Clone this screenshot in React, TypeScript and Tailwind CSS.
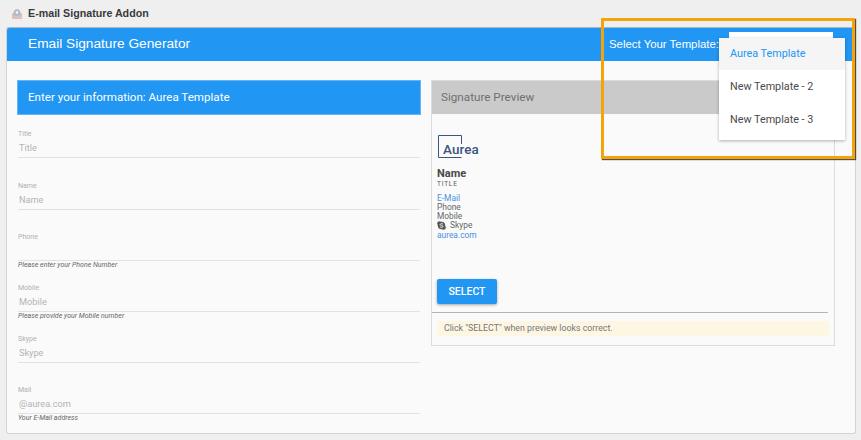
import React from 'react';

const fields = [
  { label: 'Title', placeholder: 'Title', help: '' },
  { label: 'Name', placeholder: 'Name', help: '' },
  { label: 'Phone', placeholder: '', help: 'Please enter your Phone Number' },
  { label: 'Mobile', placeholder: 'Mobile', help: 'Please provide your Mobile number' },
  { label: 'Skype', placeholder: 'Skype', help: '' },
  { label: 'Mail', placeholder: '@aurea.com', help: 'Your E-Mail address' },
];

function AddonIcon() {
  return (
    <svg width="12" height="12" viewBox="0 0 12 12" className="shrink-0">
      <path d="M1 6 L3 4 H9 L11 6 V11 H1 Z" fill="#e3b7a8" />
      <rect x="1" y="8" width="10" height="3" fill="#d8c4bd" />
      <circle cx="6" cy="4.5" r="3.2" fill="#a9b6d6" />
      <circle cx="6" cy="4.5" r="1.4" fill="#eef0f6" />
    </svg>
  );
}

function SkypeIcon() {
  return (
    <svg width="9" height="9" viewBox="0 0 9 9" className="shrink-0">
      <circle cx="2.4" cy="2.4" r="2.2" fill="#555" />
      <circle cx="6.6" cy="6.6" r="2.2" fill="#555" />
      <circle cx="4.5" cy="4.5" r="3.7" fill="#555" />
      <path d="M6.1 3.2 C5.4 2.4 3.1 2.5 3.1 3.6 C3.1 4.8 6 4.2 6 5.5 C6 6.6 3.6 6.6 2.9 5.7" fill="none" stroke="#fff" strokeWidth="0.9" />
    </svg>
  );
}

function AureaLogo() {
  return (
    <div className="relative ml-[1px] w-[42px] h-[24px]">
      <svg width="25" height="24" viewBox="0 0 25 24" className="absolute left-0 top-0">
        <path d="M23.5 9 V0.5 H0.5 V22.5 H23.5" fill="none" stroke="#3a5580" strokeWidth="1" />
      </svg>
      <span className="absolute left-[5px] top-[7px] text-[13.4px] leading-[16px] font-medium tracking-[0.1px] text-[#3a5580] font-['Roboto',sans-serif]">
        Aurea
      </span>
    </div>
  );
}

export default function App() {
  return (
    <div className="relative w-[861px] h-[440px] overflow-hidden bg-[#efefef] font-['Roboto',sans-serif]">
      <div className="h-[27px] pl-[11px] flex items-center gap-[5px]">
        <AddonIcon />
        <span className="text-[10.7px] font-bold text-[#3a3a3a] font-['Liberation_Sans',sans-serif]">E-mail Signature Addon</span>
      </div>

      <div className="ml-[6px] w-[850px] h-[407px] bg-[#fafafa] border border-[#d4d4d4] border-t-[#a9b8c4] rounded-[3px] overflow-hidden">
        <div className="h-[33px] bg-[#2196f3] pl-[21px] pr-[136px] flex items-center justify-between text-white">
          <span className="text-[13.7px] font-['Liberation_Sans',sans-serif]">Email Signature Generator</span>
          <span className="text-[11.4px] font-['Liberation_Sans',sans-serif]">Select Your Template:</span>
        </div>

        <div className="flex gap-[10px] pl-[10px] pt-[19px]">
          <div className="w-[404px]">
            <div className="h-[35px] bg-[#2196f3] border border-[#64b5f6] pl-[10px] flex items-center text-[11.6px] text-white">
              Enter your information: Aurea Template
            </div>
            <div className="mt-[15.4px] px-[1px]">
              {fields.map(f => (
                <div key={f.label} className="h-[51.2px]">
                  <div className="h-[28px] border-b border-[#e2e2e2]">
                    <div className="h-[9px] text-[7px] leading-[9px] text-[#b0b0b0]">{f.label}</div>
                    <div className="h-[18px] pl-[1px] text-[9.2px] leading-[18px] text-[#b4b4b4]">{f.placeholder}</div>
                  </div>
                  {f.help && <div className="text-[7px] leading-[9px] italic text-[#666]">{f.help}</div>}
                </div>
              ))}
            </div>
          </div>

          <div className="w-[404px] h-[266px] border border-[#dcdcdc]">
            <div className="h-[33px] bg-[#cacaca] pl-[9px] flex items-center text-[11.7px] text-[#707070]">
              Signature Preview
            </div>
            <div className="pl-[5px] pt-[21px]">
              <AureaLogo />
              <div className="mt-[8px] text-[11px] leading-[13px] font-bold text-[#484848]">Name</div>
              <div className="text-[6.5px] leading-[9px] tracking-[0.8px] text-[#555]">TITLE</div>
              <div className="mt-[5px] text-[8.4px] leading-[9px] text-[#666]">
                <div className="text-[#4a90e2]">E-Mail</div>
                <div>Phone</div>
                <div>Mobile</div>
                <div className="flex items-center gap-[4px]"><SkypeIcon />Skype</div>
                <div className="mt-[1px] text-[#4a90e2]">aurea.com</div>
              </div>
              <div className="mt-[39px] w-[60px] h-[25px] bg-[#2196f3] rounded-[2px] shadow-[0_1px_3px_rgba(0,0,0,0.35)] flex items-center justify-center text-[10.5px] font-medium text-white">
                SELECT
              </div>
            </div>
            <div className="mt-[8px] w-[396px] border-t border-[#b5b5b5]" />
            <div className="mt-[8px] ml-[5px] w-[392px] h-[15px] bg-[#fdf6e3] pl-[7px] flex items-center text-[8.8px] text-[#777]">
              Click "SELECT" when preview looks correct.
            </div>
          </div>
        </div>
      </div>

      {/* highlight box drawn over the screenshot */}
      <div className="absolute left-[601px] top-[18px] w-[254px] h-[141px] border-[3px] border-[#f5a30a] shadow-[1px_1px_1px_rgba(40,40,40,0.8)]" />

      {/* open select menu */}
      <div className="absolute left-[729px] top-[32px] w-[104px] h-[6px] bg-white" />
      <div className="absolute left-[719px] top-[38px] w-[126px] h-[102px] bg-white shadow-[0_1px_3px_rgba(0,0,0,0.3)] text-[10.8px] text-[#4a4a4a]">
        <div className="h-[32px] bg-[#f5f5f5] pl-[11px] flex items-center text-[#2196f3]">Aurea Template</div>
        <div className="h-[32px] mt-[1px] pl-[11px] flex items-center">New Template - 2</div>
        <div className="h-[32px] mt-[1px] pl-[11px] flex items-center">New Template - 3</div>
      </div>
    </div>
  );
}
